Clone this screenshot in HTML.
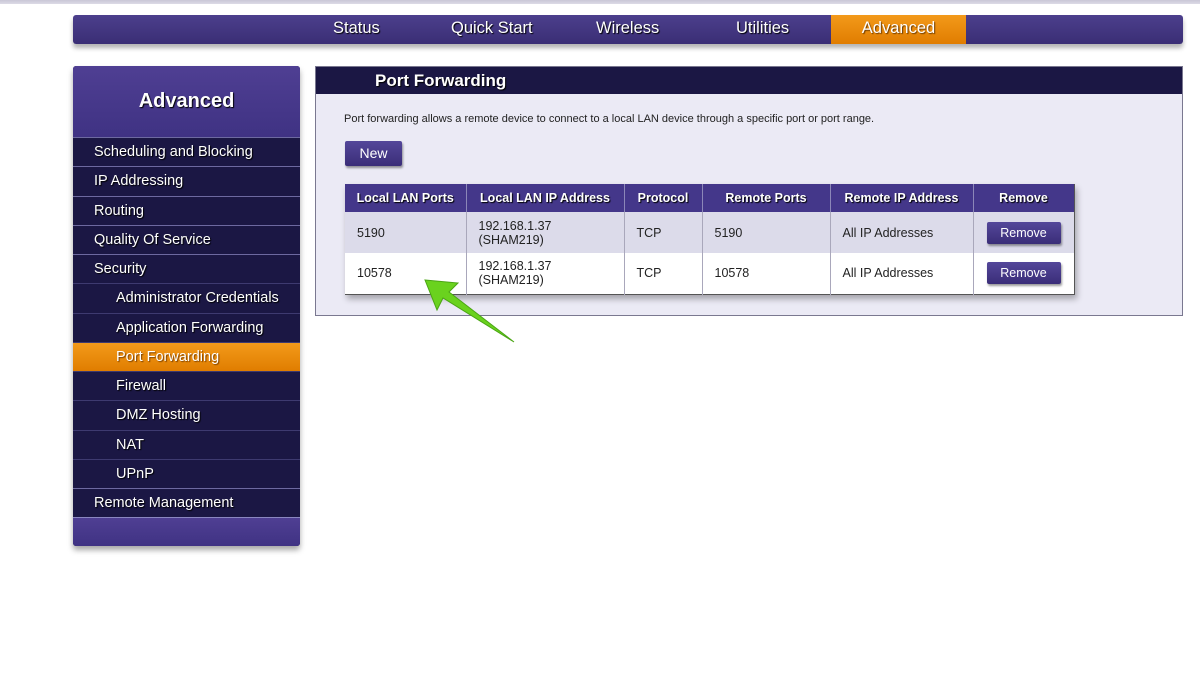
<!DOCTYPE html>
<html><head><meta charset="utf-8"><style>
*{box-sizing:border-box;margin:0;padding:0}
body{width:1200px;height:675px;background:#fff;font-family:"Liberation Sans",Arial,sans-serif;position:relative;overflow:hidden}
.strip{position:absolute;left:0;top:0;width:1200px;height:4px;background:linear-gradient(#c9c6d6,#dcdae6)}
.top{position:absolute;left:73px;top:15px;width:1110px;height:29px;background:linear-gradient(#4c3f8c,#3a2e75);border-radius:3px;box-shadow:0 4px 5px rgba(0,0,0,.3)}
.top span{position:absolute;top:4px;color:#fff;font-size:16.5px;text-shadow:1px 1px 1px #000}
.top .adv{left:758px;top:0;width:135px;height:29px;background:linear-gradient(#f39a1a,#e07d00);text-align:center;padding-top:4px;text-shadow:1px 1px 1px #6a3a00}
.side{position:absolute;left:73px;top:66px;width:227px;height:480px;background:#1b1744;border-radius:3px;box-shadow:0 4px 6px rgba(0,0,0,.35);overflow:hidden}
.sh{height:71px;background:linear-gradient(#4f3f93,#3f3283);color:#fff;font-weight:bold;font-size:20px;text-align:center;padding-top:24px;text-shadow:1px 1px 1px #000}
.it{height:29.25px;border-top:1px solid #6d69a0;color:#fff;font-size:14.5px;padding:6px 0 0 21px;text-shadow:1px 1px 1px #000}
.it.s{padding-left:43px;border-top-color:#3e3a70}
.it.on{background:linear-gradient(#f39a1a,#e07d00);text-shadow:1px 1px 1px #7a4000}
.sf{height:30px;border-top:1px solid #8a86c0;background:linear-gradient(#4f3f93,#3f3283)}
.main{position:absolute;left:315px;top:66px;width:868px;height:250px;background:#ebeaf5;border:1px solid #7a7890}
.mh{height:27px;background:#1b1744;color:#fff;font-weight:bold;font-size:17px;padding:4px 0 0 59px;text-shadow:1px 1px 1px #000}
.desc{position:absolute;left:28px;top:46px;font-size:11px;color:#222}
.new{position:absolute;left:29px;top:74px;width:57px;height:25px;background:linear-gradient(#54479a,#3a2d78);border-radius:2px;color:#fff;font-size:14px;text-align:center;padding-top:4px;box-shadow:1px 2px 2px rgba(0,0,0,.4)}
table{position:absolute;left:29px;top:117px;border-collapse:collapse;font-size:12.5px;color:#222;box-shadow:2px 4px 6px rgba(0,0,0,.3)}
th{background:#44378a;color:#fff;font-weight:bold;height:28px;border-left:1px solid #8c87b8;font-size:12.5px;text-shadow:1px 1px 1px #000}
td{height:41px;border-left:1px solid #a9a7bb;padding-left:12px;line-height:14px}
tr.a td{background:#dcdbea}tr.b td{background:#fff}
table{border-bottom:1px solid #555;border-right:1px solid #555}
.rb{display:inline-block;width:74px;height:22px;background:linear-gradient(#54479a,#3a2d78);color:#fff;text-align:center;padding-top:4px;border-radius:2px;font-size:12.5px;box-shadow:1px 2px 2px rgba(0,0,0,.4)}
</style></head><body>
<div class="strip"></div>
<div class="top"><span style="left:260px">Status</span><span style="left:378px">Quick Start</span><span style="left:523px">Wireless</span><span style="left:663px">Utilities</span><span class="adv">Advanced</span></div>
<div class="side"><div class="sh">Advanced</div>
<div class="it">Scheduling and Blocking</div><div class="it">IP Addressing</div><div class="it">Routing</div><div class="it">Quality Of Service</div><div class="it">Security</div>
<div class="it s">Administrator Credentials</div><div class="it s">Application Forwarding</div><div class="it s on">Port Forwarding</div><div class="it s">Firewall</div><div class="it s">DMZ Hosting</div><div class="it s">NAT</div><div class="it s">UPnP</div>
<div class="it">Remote Management</div><div class="sf"></div></div>
<div class="main"><div class="mh">Port Forwarding</div>
<div class="desc">Port forwarding allows a remote device to connect to a local LAN device through a specific port or port range.</div>
<div class="new">New</div>
<table>
<tr><th style="width:121px;border-left:none">Local LAN Ports</th><th style="width:158px">Local LAN IP Address</th><th style="width:78px">Protocol</th><th style="width:128px">Remote Ports</th><th style="width:143px">Remote IP Address</th><th style="width:101px">Remove</th></tr>
<tr class="a"><td style="border-left:none">5190</td><td>192.168.1.37<br>(SHAM219)</td><td>TCP</td><td>5190</td><td>All IP Addresses</td><td style="padding-left:13px"><span class="rb">Remove</span></td></tr>
<tr class="b"><td style="border-left:none">10578</td><td>192.168.1.37<br>(SHAM219)</td><td>TCP</td><td>10578</td><td>All IP Addresses</td><td style="padding-left:13px"><span class="rb">Remove</span></td></tr>
</table></div>
<svg style="position:absolute;left:0;top:0" width="1200" height="675"><path d="M425,280 L458,283 L449,292 L514,342 L443,298 L437,310 Z" fill="#6ad21e" stroke="#4aa514" stroke-width="1"/></svg>
</body></html>
